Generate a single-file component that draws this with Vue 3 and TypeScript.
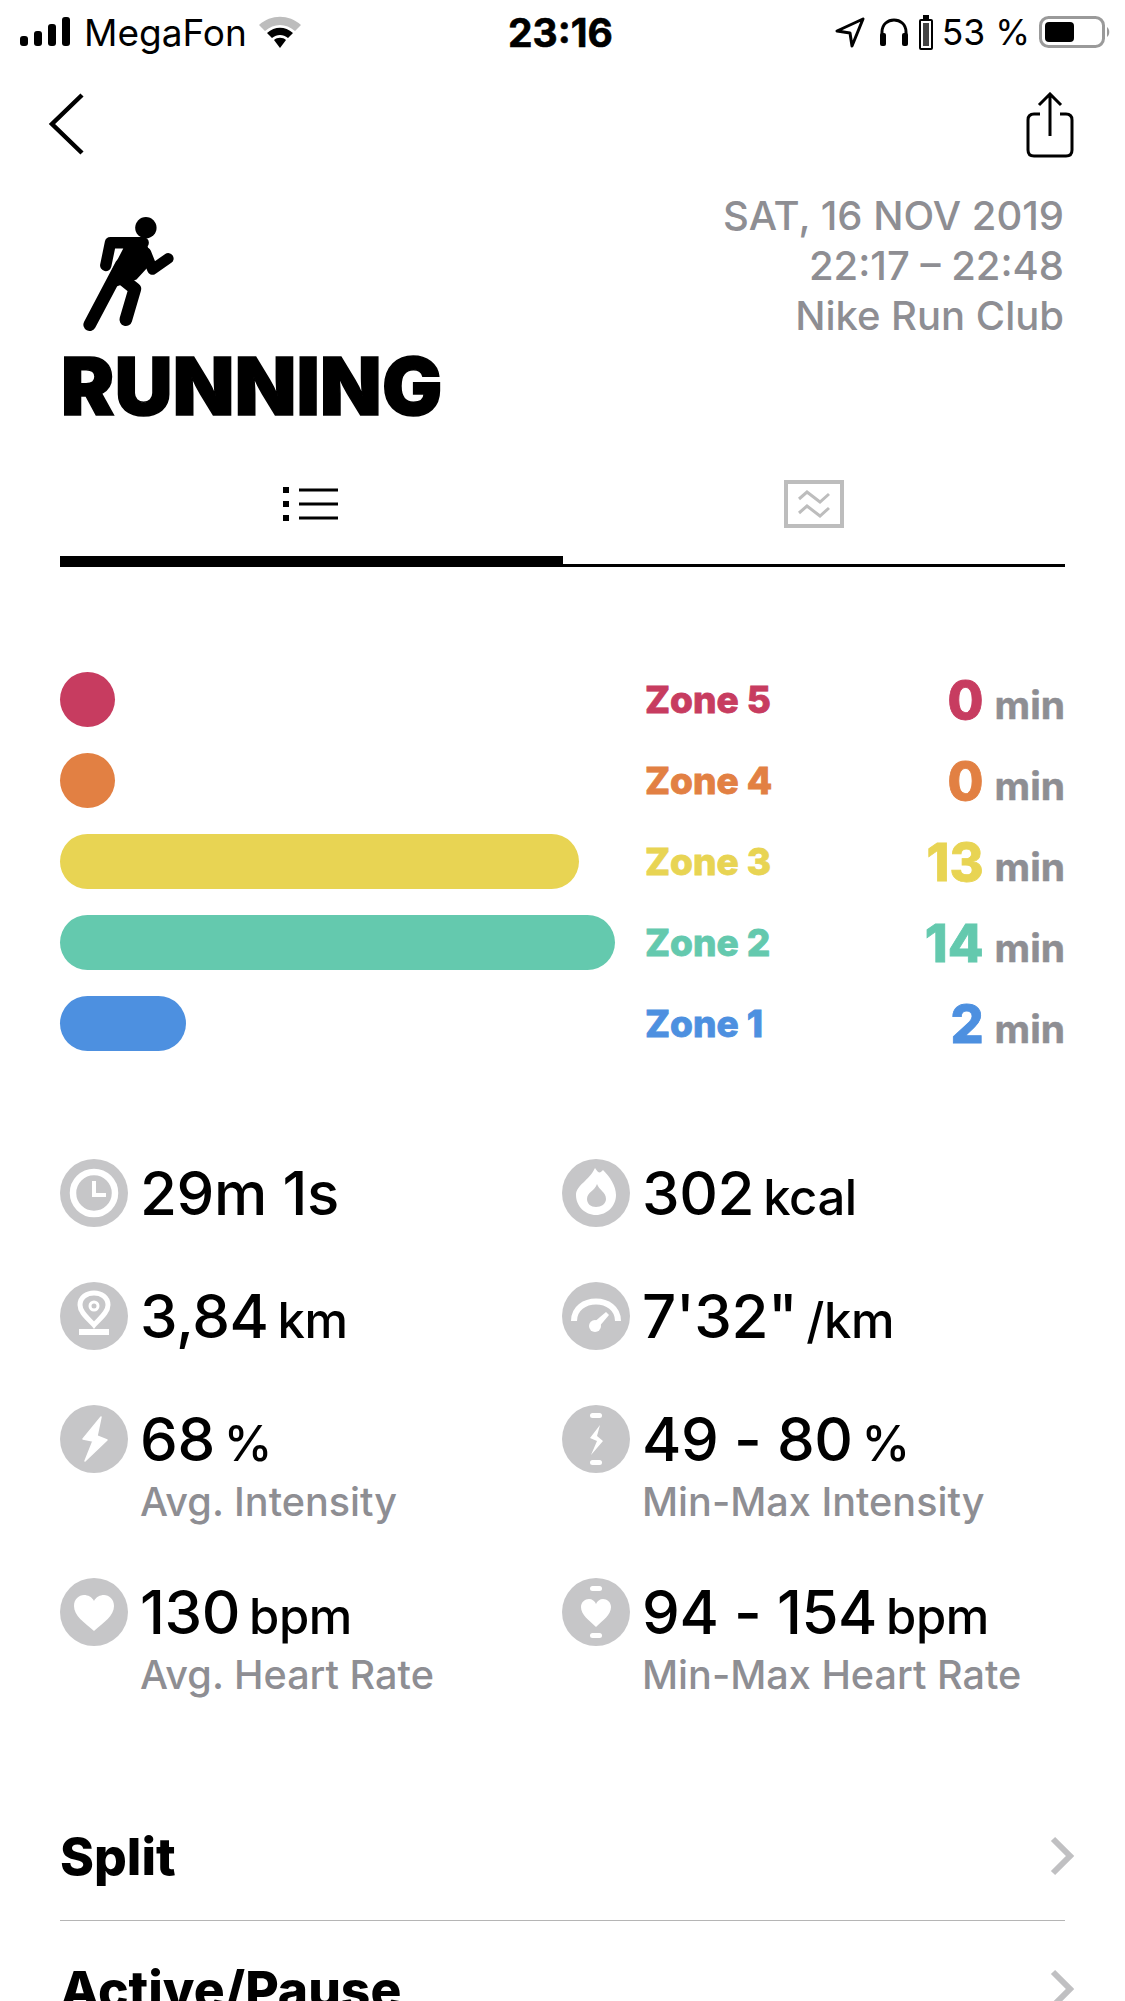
<template>
  <div class="screen">
    <div class="status">
      <div class="status__left">
        <svg class="signal" width="52" height="32" viewBox="0 0 52 32">
          <rect x="0" y="20" width="8" height="10" rx="3" />
          <rect x="14" y="15" width="8" height="15" rx="3" />
          <rect x="28" y="8" width="8" height="22" rx="3" />
          <rect x="42" y="1" width="8" height="29" rx="3" />
        </svg>
        <span>MegaFon</span>
        <svg class="wifi" width="46" height="34" viewBox="0 0 46 34">
          <path d="M2 10 C14 -1 32 -1 44 10 L38 16 C29 8 17 8 8 16 Z" fill="#bdbdbd" />
          <path d="M10 18 C18 11 28 11 36 18 L31 23 C26 19 20 19 15 23 Z" fill="#000" />
          <path d="M17 25 C20 22 26 22 29 25 L23 33 Z" fill="#000" />
        </svg>
      </div>
      <div class="status__time">23:16</div>
      <div class="status__right">
        <svg class="status__arrow" width="30" height="32" viewBox="0 0 30 32">
          <path d="M28 3 L2 15 L15 17 L17 30 Z" fill="none" stroke="#000" stroke-width="3" stroke-linejoin="round" />
        </svg>
        <svg width="32" height="30" viewBox="0 0 32 30">
          <path d="M4 24 V15 C4 -1 28 -1 28 15 V24" fill="none" stroke="#000" stroke-width="3" />
          <rect x="2" y="16" width="6" height="13" rx="2" />
          <rect x="24" y="16" width="6" height="13" rx="2" />
        </svg>
        <svg width="14" height="36" viewBox="0 0 14 36">
          <rect x="1" y="6" width="12" height="29" rx="1" fill="none" stroke="#000" stroke-width="2" />
          <rect x="4" y="9" width="6" height="23" fill="#444" />
          <rect x="4" y="1" width="6" height="5" />
        </svg>
        <span class="status__pct">53 %</span>
        <svg class="battery" width="72" height="32" viewBox="0 0 72 32">
          <rect x="1.5" y="1.5" width="63" height="29" rx="8" fill="none" stroke="#9a9a9a" stroke-width="3" />
          <rect x="6" y="6" width="29" height="20" rx="4" />
          <path d="M68 11 C71 13 71 19 68 21 Z" fill="#9a9a9a" />
        </svg>
      </div>
    </div>

    <div class="nav">
      <svg width="38" height="64" viewBox="0 0 38 64">
        <path d="M34 3 L4 32 L34 61" fill="none" stroke="#000" stroke-width="4.5" />
      </svg>
      <svg width="48" height="66" viewBox="0 0 48 66">
        <path d="M14 22 H8 C4 22 2 24 2 28 V58 C2 62 4 64 8 64 H40 C44 64 46 62 46 58 V28 C46 24 44 22 40 22 H34" fill="none" stroke="#000" stroke-width="3" />
        <path d="M24 44 V3 M13 13 L24 2 L35 13" fill="none" stroke="#000" stroke-width="3" />
      </svg>
    </div>

    <header class="head">
      <div>
        <svg class="runner" width="92" height="117" viewBox="130 80 275 350">
          <circle cx="318" cy="115" r="32" />
          <path d="M250 178 L250 145 L315 150 L340 215 L290 270 L232 290 L215 245 Z" />
          <path d="M310 160 H212 L198 228" fill="none" stroke="#000" stroke-width="34" stroke-linecap="round" stroke-linejoin="round" />
          <path d="M245 225 L150 405" fill="none" stroke="#000" stroke-width="38" stroke-linecap="round" />
          <path d="M240 262 L285 298 L258 390" fill="none" stroke="#000" stroke-width="38" stroke-linecap="round" stroke-linejoin="round" />
          <path d="M318 190 L338 240 L385 207" fill="none" stroke="#000" stroke-width="32" stroke-linecap="round" stroke-linejoin="round" />
        </svg>
        <h1 class="head__title">RUNNING</h1>
      </div>
      <div class="head__meta">
        <div>SAT, 16 NOV 2019</div>
        <div>22:17 – 22:48</div>
        <div>Nike Run Club</div>
      </div>
    </header>

    <div class="tabs">
      <div class="tabs__item tabs__item--active">
        <svg width="56" height="40" viewBox="0 0 56 40">
          <rect x="0" y="3" width="6" height="6" />
          <rect x="0" y="17" width="6" height="6" />
          <rect x="0" y="31" width="6" height="6" />
          <path d="M16 6 H55 M16 20 H55 M16 34 H55" stroke="#000" stroke-width="3" />
        </svg>
      </div>
      <div class="tabs__item">
        <svg width="60" height="48" viewBox="0 0 60 48">
          <rect x="2" y="2" width="56" height="44" fill="none" stroke="#bdbdbd" stroke-width="4" />
          <path d="M15 19 L23 12 L36 22 L45 14 M15 33 L23 26 L36 36 L45 28" fill="none" stroke="#bdbdbd" stroke-width="3" />
        </svg>
      </div>
    </div>

    <section class="zones">
      <div v-for="z in zones" :key="z.name" class="zone" :style="{ color: z.color }">
        <div class="zone__track">
          <div class="zone__bar" :style="{ width: z.width + 'px', background: z.color }"></div>
        </div>
        <div class="zone__name">{{ z.name }}</div>
        <div class="zone__value">
          <b>{{ z.mins }}</b>
          <span>min</span>
        </div>
      </div>
    </section>

    <section class="stats">
      <div v-for="s in stats" :key="s.icon" class="stat">
        <svg class="stat__icon" width="68" height="68" viewBox="0 0 68 68">
          <circle cx="34" cy="34" r="34" fill="#c6c6c8" />
          <template v-if="s.icon === 'clock'">
            <circle cx="34" cy="34" r="21" fill="none" stroke="#fff" stroke-width="6.5" />
            <path d="M34 22 V36 H46" fill="none" stroke="#fff" stroke-width="4" />
          </template>
          <template v-else-if="s.icon === 'flame'">
            <path d="M33 9 C37 15 38 14 41 11 C48 18 54 27 54 36 C54 47 45 56 34 56 C23 56 14 47 14 36 C14 26 27 22 33 9 Z" fill="#fff" />
            <path d="M35 25 C37 31 44 33 44 40 C44 45 39 48 34 48 C29 48 25 45 25 40 C25 33 33 32 35 25 Z" fill="#c6c6c8" />
          </template>
          <template v-else-if="s.icon === 'pin'">
            <path d="M34 43 C29 37 20 31 20 23 C20 15 27 11 34 11 C41 11 48 15 48 23 C48 31 39 37 34 43 Z" fill="none" stroke="#fff" stroke-width="5" />
            <circle cx="34" cy="24" r="4" fill="none" stroke="#fff" stroke-width="3" />
            <rect x="19" y="47" width="30" height="6" fill="#fff" />
          </template>
          <template v-else-if="s.icon === 'gauge'">
            <path d="M12 39 C12 13 56 13 56 39" fill="none" stroke="#fff" stroke-width="6" />
            <circle cx="33" cy="44" r="6" fill="#fff" />
            <path d="M31 41 L44 30 L47 33 L36 46 Z" fill="#fff" />
          </template>
          <template v-else-if="s.icon === 'bolt'">
            <path d="M41 12 L23 34 L33 36 L25 56 L47 35 L37 31 Z" fill="#fff" stroke="#fff" stroke-width="1.5" stroke-linejoin="round" />
          </template>
          <template v-else-if="s.icon === 'boltRange'">
            <rect x="28" y="8" width="12" height="5" rx="2.5" fill="#fff" />
            <rect x="28" y="55" width="12" height="5" rx="2.5" fill="#fff" />
            <path d="M38 20 L28 33 L35 36 L29 50 L41 36 L35 31 Z" fill="#fff" />
          </template>
          <template v-else-if="s.icon === 'heart'">
            <path d="M34 53 C24 44 14 38 14 28 C14 21 19 17 24 17 C28 17 32 19 34 23 C36 19 40 17 44 17 C49 17 54 21 54 28 C54 38 44 44 34 53 Z" fill="#fff" />
          </template>
          <template v-else>
            <rect x="28" y="8" width="12" height="5" rx="2.5" fill="#fff" />
            <rect x="28" y="55" width="12" height="5" rx="2.5" fill="#fff" />
            <path d="M34 49 C27 42 19 37 19 29 C19 24 23 21 27 21 C30 21 33 23 34 26 C35 23 38 21 41 21 C45 21 49 24 49 29 C49 37 41 42 34 49 Z" fill="#fff" />
          </template>
        </svg>
        <div class="stat__body">
          <div class="stat__value">
            <span>{{ s.value }}</span>
            <small v-if="s.unit">{{ s.unit }}</small>
          </div>
          <div v-if="s.label" class="stat__label">{{ s.label }}</div>
        </div>
      </div>
    </section>

    <section class="links">
      <div v-for="l in links" :key="l" class="link">
        <span>{{ l }}</span>
        <svg width="26" height="40" viewBox="0 0 26 40">
          <path d="M4 3 L21 20 L4 37" fill="none" stroke="#c0c0c2" stroke-width="6" />
        </svg>
      </div>
    </section>
  </div>
</template>

<script setup lang="ts">
interface Zone {
  name: string;
  mins: number;
  width: number;
  color: string;
}

interface Stat {
  icon: string;
  value: string;
  unit?: string;
  label?: string;
}

const zones: Zone[] = [
  { name: "Zone 5", mins: 0, width: 55, color: "#c73c60" },
  { name: "Zone 4", mins: 0, width: 55, color: "#e28043" },
  { name: "Zone 3", mins: 13, width: 519, color: "#e8d453" },
  { name: "Zone 2", mins: 14, width: 555, color: "#64c9ae" },
  { name: "Zone 1", mins: 2, width: 126, color: "#4d90e0" },
];

const stats: Stat[] = [
  { icon: "clock", value: "29m 1s" },
  { icon: "flame", value: "302", unit: "kcal" },
  { icon: "pin", value: "3,84", unit: "km" },
  { icon: "gauge", value: "7'32\"", unit: "/km" },
  { icon: "bolt", value: "68", unit: "%", label: "Avg. Intensity" },
  { icon: "boltRange", value: "49 - 80", unit: "%", label: "Min-Max Intensity" },
  { icon: "heart", value: "130", unit: "bpm", label: "Avg. Heart Rate" },
  { icon: "heartRange", value: "94 - 154", unit: "bpm", label: "Min-Max Heart Rate" },
];

const links = ["Split", "Active/Pause"];
</script>

<style>
html,
body {
  margin: 0;
  background: #fff;
}
</style>

<style scoped>
.screen {
  width: 1125px;
  height: 2001px;
  overflow: hidden;
  background: #fff;
  color: #000;
  font-family: Inter, "Noto Sans", sans-serif;
}

.status {
  display: grid;
  grid-template-columns: 1fr auto 1fr;
  align-items: center;
  height: 64px;
  padding: 0 14px 0 20px;
  font-size: 37px;
}

.status__left,
.status__right {
  display: flex;
  align-items: center;
}

.status__left {
  gap: 12px;
}

.status__left .wifi {
  margin-left: -2px;
}

.status__right {
  justify-content: flex-end;
  gap: 9px;
}

.status__arrow {
  margin-right: 4px;
}

.status__pct {
  font-size: 35.5px;
}

.status__time {
  margin-left: -10px;
  font-size: 39px;
  font-weight: 700;
  -webkit-text-stroke: 0.6px #000;
}

.nav {
  display: flex;
  justify-content: space-between;
  padding: 28px 51px 0 48px;
}

.head {
  display: flex;
  justify-content: space-between;
  padding: 0 61px 0 61px;
  margin-top: 27px;
}

.runner {
  display: block;
  margin: 31px 0 0 22px;
}

.head__title {
  margin: 8px 0 0;
  font-size: 80px;
  line-height: 90px;
  font-weight: 900;
  letter-spacing: 0.3px;
  -webkit-text-stroke: 1.5px #000;
}

.head__meta {
  margin-top: 6px;
  font-size: 40px;
  line-height: 50px;
  font-weight: 500;
  text-align: right;
  color: #8e8e93;
}

.tabs {
  display: grid;
  grid-template-columns: 1fr 1fr;
  margin: 20px 60px 0;
  border-bottom: 3px solid #000;
}

.tabs__item {
  display: flex;
  justify-content: center;
  align-items: center;
  height: 116px;
  margin-bottom: -3px;
  border-bottom: 11px solid transparent;
  box-sizing: border-box;
}

.tabs__item--active {
  border-bottom-color: #000;
}

.zones {
  display: flex;
  flex-direction: column;
  gap: 26px;
  margin: 100px 60px 0;
}

.zone {
  display: grid;
  grid-template-columns: 585px 1fr auto;
  align-items: center;
  height: 55px;
}

.zone__bar {
  height: 55px;
  border-radius: 28px;
}

.zone__name {
  font-size: 37px;
  font-weight: 800;
  -webkit-text-stroke: 0.8px currentColor;
}

.zone__value {
  display: flex;
  align-items: baseline;
  gap: 11px;
  margin-top: 2px;
}

.zone__value b {
  font-size: 52px;
  font-weight: 800;
  -webkit-text-stroke: 0.8px currentColor;
}

.zone__value span {
  font-size: 39px;
  font-weight: 700;
  color: #8e8e93;
  -webkit-text-stroke: 0.5px #8e8e93;
}

.stats {
  display: grid;
  grid-template-columns: 502px 1fr;
  grid-template-rows: 123px 123px 173px 173px;
  margin: 113px 0 0 60px;
}

.stat {
  display: flex;
  gap: 12px;
}

.stat__value {
  display: flex;
  align-items: baseline;
  gap: 9px;
  font-size: 60px;
  line-height: 68px;
  font-weight: 500;
  letter-spacing: -0.4px;
}

.stat__value small {
  font-size: 49px;
}

.stat__label {
  margin-top: 1px;
  font-size: 39.6px;
  line-height: 46px;
  font-weight: 500;
  color: #8e8e93;
}

.links {
  margin: 0 60px;
  padding-top: 41px;
}

.link {
  display: flex;
  justify-content: space-between;
  align-items: center;
  height: 128px;
  margin-right: -10px;
  font-size: 51.5px;
  font-weight: 800;
}

.link:first-child {
  border-bottom: 1px solid #b5b5b5;
  margin-right: 0;
}

.link:first-child svg {
  margin-right: -10px;
}

.link:last-child {
  padding-top: 4px;
}
</style>
